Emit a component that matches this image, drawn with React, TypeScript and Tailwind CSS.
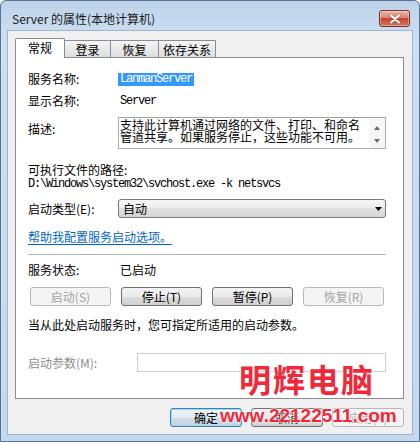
import React from 'react'

function CloseButton(): JSX.Element {
  return (
    <div className="flex h-[17px] w-[31px] items-center justify-center rounded-[3px] border border-[#7a3129] bg-[linear-gradient(#eab2a4,#d98673_45%,#c5452f_50%,#d0765a)] shadow-[inset_0_0_0_1px_rgba(255,255,255,0.35)]">
      <svg width="12" height="10" viewBox="0 0 12 10">
        <path d="M2 1.5l8 7M10 1.5l-8 7" stroke="#5a1c16" strokeWidth="3.4" strokeLinecap="round" opacity="0.35" />
        <path d="M2 1.5l8 7M10 1.5l-8 7" stroke="#fff" strokeWidth="2.2" strokeLinecap="round" />
      </svg>
    </div>
  )
}

function Button({
  label,
  disabled,
  width,
  primary,
}: {
  label: string
  disabled?: boolean
  width: string
  primary?: boolean
}): JSX.Element {
  if (disabled) {
    return (
      <div
        className={`${width} flex h-[19px] items-center justify-center rounded-[3px] border border-[#b5b9bc] bg-[#f4f4f4] leading-none text-[#a3a3a3]`}
      >
        {label}
      </div>
    )
  }
  return (
    <div
      className={`${width} flex h-[19px] items-center justify-center rounded-[3px] border leading-none ${
        primary
          ? 'border-[#3c7fb1] bg-[linear-gradient(#eef4f8,#e3ecf2_50%,#d3dfe8_50%,#c3d3df)] shadow-[inset_0_0_0_1px_#9fdcf6]'
          : 'border-[#707070] bg-[linear-gradient(#f2f2f2,#ebebeb_50%,#dddddd_50%,#cfcfcf)]'
      }`}
    >
      {label}
    </div>
  )
}

function Tab({ label, active, width }: { label: string; active?: boolean; width: string }): JSX.Element {
  if (active) {
    return (
      <div
        className={`${width} flex h-[20px] items-center justify-center rounded-t-[2px] border border-b-0 border-[#898c95] bg-white pb-[1px] leading-none`}
      >
        {label}
      </div>
    )
  }
  return (
    <div
      className={`${width} mb-[1px] flex h-[17px] items-center justify-center border border-b-0 border-l-0 border-[#898c95] bg-[linear-gradient(#f5f5f5,#e9e9e9_50%,#dedede)] pt-[1px] leading-none`}
    >
      {label}
    </div>
  )
}

const mono = "[font-family:'Liberation_Mono',monospace] text-[12px] tracking-[-1.2px]"

export default function App(): JSX.Element {
  return (
    <div className="relative h-[442px] w-[420px] overflow-hidden bg-white text-[12px] text-black [font-family:'Noto_Sans_CJK_SC',sans-serif]">
      <div className="flex h-full flex-col rounded-t-[6px] border border-[#5a7394] bg-[linear-gradient(#bed3ea,#cddff2_40px,#c5d9ee)]">
        {/* title bar */}
        <div className="flex h-[29px] items-center justify-between pl-[11px] pr-[9px] pt-[6px]">
          <span className="leading-none text-[#1b1b1b]">Server 的属性(本地计算机)</span>
          <CloseButton />
        </div>

        {/* client */}
        <div className="mx-[6px] mb-[6px] flex flex-1 flex-col border border-[#9fb5cf] bg-[#f0f0f0] pl-[7px] pr-[8px] pt-[7px]">
          <div className="relative z-10 -mb-[1px] flex h-[20px] items-end">
            <Tab label="常规" active width="w-[50px]" />
            <Tab label="登录" width="w-[46px]" />
            <Tab label="恢复" width="w-[48px]" />
            <Tab label="依存关系" width="w-[57px]" />
          </div>

          <div className="flex h-[342px] flex-col border border-[#898c95] bg-white pl-[12px] pr-[17px]">
            <div className="mt-[14px] flex h-[14px] items-center">
              <span className="w-[90px]">服务名称:</span>
              <span className={`${mono} bg-[#3399ff] px-[2px] leading-[13px] text-white`}>LanmanServer</span>
            </div>
            <div className="mt-[8px] flex h-[14px] items-center">
              <span className="w-[90px]">显示名称:</span>
              <span className={`${mono} pl-[2px]`}>Server</span>
            </div>
            <div className="mt-[9px] flex">
              <span className="mt-[5px] w-[90px] leading-[14px]">描述:</span>
              <div className="flex h-[32px] flex-1 border border-[#abadb3] border-t-[#a0a3aa] bg-white">
                <div className="flex-1 overflow-hidden whitespace-nowrap pl-[1px] pt-[1px] leading-[12px]">
                  <div>支持此计算机通过网络的文件、打印、和命名</div>
                  <div>管道共享。如果服务停止，这些功能不可用。</div>
                </div>
                <div className="flex w-[16px] flex-col items-center justify-between bg-[#f6f6f6] pb-[5px] pt-[8px]">
                  <svg width="6" height="4" viewBox="0 0 6 4">
                    <path d="M0 4L3 0l3 4z" fill="#6a6a6a" />
                  </svg>
                  <svg width="6" height="4" viewBox="0 0 6 4">
                    <path d="M0 0h6L3 4z" fill="#6a6a6a" />
                  </svg>
                </div>
              </div>
            </div>
            <div className="mt-[14px] h-[14px] leading-[14px]">可执行文件的路径:</div>
            <div className={`${mono} h-[14px] leading-[14px]`}>
              {'D:\\Windows\\system32\\svchost.exe -k netsvcs'}
            </div>
            <div className="mt-[8px] flex h-[19px] items-center">
              <span className="w-[90px]">启动类型(E):</span>
              <div className="flex h-full flex-1 items-center justify-between rounded-[3px] border border-[#7a7a7a] bg-[linear-gradient(#f6f6f6,#ececec_50%,#e0e0e0_50%,#d6d6d6)] pl-[4px] pr-[3px]">
                <span className="leading-none">自动</span>
                <svg width="7" height="4" viewBox="0 0 7 4">
                  <path d="M0 0h7L3.5 4z" fill="#000" />
                </svg>
              </div>
            </div>
            <div className="mt-[12px] h-[14px] leading-[14px] text-[#0066cc] underline underline-offset-2">
              帮助我配置服务启动选项。
            </div>
            <div className="mt-[10px] h-[1px] bg-[#b4b4b4]" />
            <div className="mt-[8px] flex h-[14px] items-center">
              <span className="w-[92px]">服务状态:</span>
              <span>已启动</span>
            </div>
            <div className="ml-[2px] mt-[10px] flex gap-[10px]">
              <Button label="启动(S)" disabled width="w-[81px]" />
              <Button label="停止(T)" width="w-[81px]" />
              <Button label="暂停(P)" width="w-[81px]" />
              <Button label="恢复(R)" disabled width="w-[81px]" />
            </div>
            <div className="mt-[12px] h-[14px] leading-[14px]">
              当从此处启动服务时，您可指定所适用的启动参数。
            </div>
            <div className="mt-[21px] flex h-[19px] items-center">
              <span className="w-[109px] text-[#8d8d8d]">启动参数(M):</span>
              <div className="h-full flex-1 border border-[#cfcfcf] bg-white" />
            </div>
          </div>

          <div className="mt-[9px] flex justify-end gap-[9px]">
            <Button label="确定" primary width="w-[72px]" />
            <Button label="取消" width="w-[72px]" />
            <Button label="应用(A)" disabled width="w-[72px]" />
          </div>
        </div>
      </div>

      {/* watermark */}
      <div className="absolute left-[239px] top-[362px] text-[32px] font-bold leading-none tracking-[2px] text-[#f0283a] [text-shadow:0_0_2px_#fff,0_0_3px_#fff]">
        明辉电脑
      </div>
      <div className="absolute left-[220px] top-[406px] text-[19px] font-bold leading-none text-[#f0283a] [font-family:'Liberation_Sans',Arial,sans-serif] [text-shadow:0_0_2px_#fff,0_0_3px_#fff]">
        www.22122511.com
      </div>
    </div>
  )
}
